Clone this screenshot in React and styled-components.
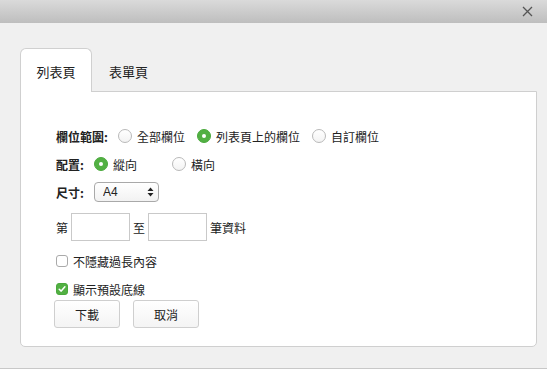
import React from "react";
import styled, { createGlobalStyle } from "styled-components";

const GlobalStyle = createGlobalStyle`
  html, body {
    margin: 0;
    padding: 0;
    background: #f0f0f0;
  }
  body {
    font-family: "Noto Sans CJK TC", "Liberation Sans", sans-serif;
    color: #222;
  }
`;

const Window = styled.div`
  width: 547px;
  height: 369px;
  display: flex;
  flex-direction: column;
  background: #f0f0f0;
  box-sizing: border-box;
`;

const TitleBar = styled.div`
  height: 23px;
  flex-shrink: 0;
  display: flex;
  align-items: center;
  justify-content: flex-end;
  padding-right: 14px;
  background: linear-gradient(#dadada, #bebebe);
`;

const CloseButton = styled.button`
  border: 0;
  background: none;
  padding: 0;
  width: 11px;
  height: 11px;
  display: flex;
  cursor: pointer;
`;

const Body = styled.div`
  flex: 1;
  padding: 25px 10px 0 20px;
  border-bottom: 1px solid #c8c8c8;
  display: flex;
  flex-direction: column;
`;

const TabList = styled.div`
  display: flex;
  height: 43px;
`;

const Tab = styled.div`
  width: ${(p) => (p.$active ? "72px" : "auto")};
  padding: ${(p) => (p.$active ? "0" : "0 16px")};
  box-sizing: border-box;
  display: flex;
  align-items: center;
  justify-content: center;
  font-size: 13px;
  color: #222;
  background: ${(p) => (p.$active ? "#fff" : "transparent")};
  border: 1px solid ${(p) => (p.$active ? "#d0d0d0" : "transparent")};
  border-bottom: 0;
  border-radius: 6px 6px 0 0;
  position: relative;
  z-index: 1;
  margin-bottom: -1px;
  height: 44px;
  padding-top: 1px;
`;

const Panel = styled.div`
  height: 256px;
  box-sizing: border-box;
  background: #fff;
  border: 1px solid #cfcfcf;
  border-radius: 0 0 5px 5px;
  padding-left: 35px;
  display: flex;
  flex-direction: column;
`;

const Row = styled.div`
  display: flex;
  align-items: center;
  height: ${(p) => p.$h || 18}px;
  margin-top: ${(p) => p.$mt}px;
  font-size: 12px;
`;

const Label = styled.span`
  font-weight: bold;
  margin-right: ${(p) => p.$gap || 10}px;
  white-space: nowrap;
`;

const Option = styled.label`
  display: flex;
  align-items: center;
  margin-right: ${(p) => p.$gap || 12}px;
  white-space: nowrap;
  cursor: pointer;
`;

const RadioDot = styled.span`
  width: 14px;
  height: 14px;
  box-sizing: border-box;
  border-radius: 50%;
  margin-right: 5px;
  display: flex;
  align-items: center;
  justify-content: center;
  border: 1px solid ${(p) => (p.$on ? "#4aa93c" : "#b9b9b9")};
  background: ${(p) => (p.$on ? "#52b043" : "linear-gradient(#fff, #f3f3f3)")};

  &::after {
    content: "";
    display: ${(p) => (p.$on ? "block" : "none")};
    width: 4px;
    height: 4px;
    border-radius: 50%;
    background: #fff;
  }
`;

const SelectWrap = styled.div`
  position: relative;
  width: 65px;
  height: 20px;
`;

const Select = styled.select`
  appearance: none;
  width: 100%;
  height: 100%;
  box-sizing: border-box;
  border: 1px solid #a9a9a9;
  border-radius: 4px;
  background: linear-gradient(#fff, #f2f2f2);
  font-family: "Liberation Sans", sans-serif;
  font-size: 12px;
  color: #222;
  padding: 0 0 0 8px;
  outline: none;
`;

const SelectArrows = styled.svg`
  position: absolute;
  right: 5px;
  top: 5px;
  pointer-events: none;
`;

const TextBox = styled.input`
  width: 59px;
  height: 28px;
  box-sizing: border-box;
  border: 1px solid #c9c9c9;
  margin: 0 3px;
  outline: none;
`;

const CheckBox = styled.span`
  width: 12px;
  height: 12px;
  box-sizing: border-box;
  border-radius: 3px;
  margin-right: 5px;
  display: flex;
  align-items: center;
  justify-content: center;
  border: 1px solid ${(p) => (p.$on ? "#4aa93c" : "#aaa")};
  background: ${(p) => (p.$on ? "#52b043" : "#fff")};
`;

const ButtonRow = styled.div`
  display: flex;
  gap: 13px;
  margin-top: 2px;
  margin-left: -2px;
`;

const Button = styled.button`
  width: 66px;
  height: 28px;
  border: 1px solid #cfcfcf;
  border-radius: 3px;
  background: linear-gradient(#fff, #f4f4f4);
  font-family: "Noto Sans CJK TC", sans-serif;
  font-size: 12px;
  color: #222;
  cursor: pointer;
`;

const Radio = ({ on, children, gap }) => (
  <Option $gap={gap}>
    <RadioDot $on={on} />
    {children}
  </Option>
);

const Check = ({ on, children }) => (
  <Option>
    <CheckBox $on={on}>
      {on && (
        <svg width="8" height="8" viewBox="0 0 8 8">
          <path d="M1.2 4.2 L3.2 6.1 L6.9 1.8" fill="none" stroke="#fff" strokeWidth="1.5" strokeLinecap="round" strokeLinejoin="round" />
        </svg>
      )}
    </CheckBox>
    {children}
  </Option>
);

export default function App() {
  return (
    <>
      <GlobalStyle />
      <Window>
        <TitleBar>
          <CloseButton aria-label="close">
            <svg width="11" height="11" viewBox="0 0 11 11">
              <path d="M1 1 L10 10 M10 1 L1 10" stroke="#555" strokeWidth="1.3" />
            </svg>
          </CloseButton>
        </TitleBar>
        <Body>
          <TabList>
            <Tab $active>列表頁</Tab>
            <Tab>表單頁</Tab>
          </TabList>
          <Panel>
            <Row $mt={35}>
              <Label>欄位範圍:</Label>
              <Radio>全部欄位</Radio>
              <Radio on>列表頁上的欄位</Radio>
              <Radio>自訂欄位</Radio>
            </Row>
            <Row $mt={10}>
              <Label>配置:</Label>
              <Radio on gap={35}>縱向</Radio>
              <Radio>橫向</Radio>
            </Row>
            <Row $mt={9} $h={20}>
              <Label>尺寸:</Label>
              <SelectWrap>
                <Select defaultValue="A4">
                  <option>A4</option>
                  <option>A3</option>
                  <option>Letter</option>
                </Select>
                <SelectArrows width="7" height="10" viewBox="0 0 7 10">
                  <path d="M3.5 0.5 L6.5 4 H0.5 Z M3.5 9.5 L6.5 6 H0.5 Z" fill="#222" />
                </SelectArrows>
              </SelectWrap>
            </Row>
            <Row $mt={11} $h={28}>
              <span>第</span>
              <TextBox />
              <span>至</span>
              <TextBox />
              <span>筆資料</span>
            </Row>
            <Row $mt={11}>
              <Check>不隱藏過長內容</Check>
            </Row>
            <Row $mt={10}>
              <Check on>顯示預設底線</Check>
            </Row>
            <ButtonRow>
              <Button>下載</Button>
              <Button>取消</Button>
            </ButtonRow>
          </Panel>
        </Body>
      </Window>
    </>
  );
}
